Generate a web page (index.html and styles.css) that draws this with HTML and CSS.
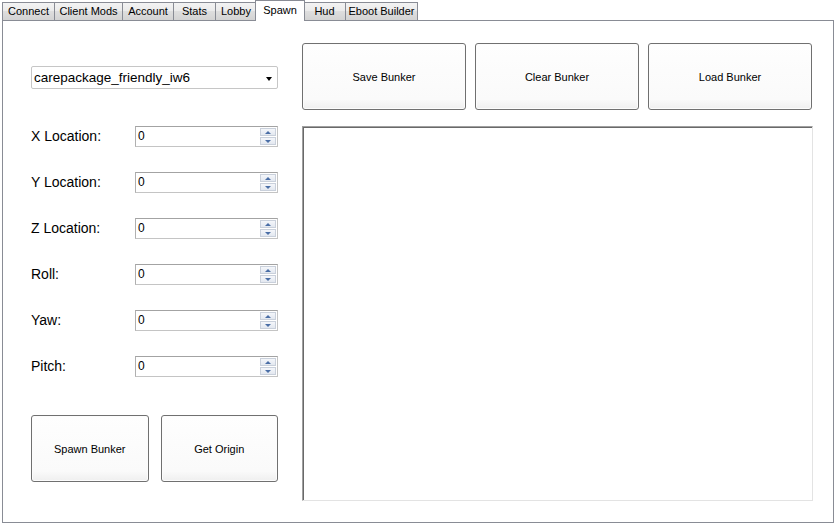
FILE: index.html
```html
<!DOCTYPE html>
<html>
<head>
<meta charset="utf-8">
<link rel="stylesheet" href="styles.css">
</head>
<body>
<div class="tabs">
  <div class="tab w-connect">Connect</div>
  <div class="tab w-client">Client Mods</div>
  <div class="tab w-account">Account</div>
  <div class="tab w-stats">Stats</div>
  <div class="tab w-lobby">Lobby</div>
  <div class="tab tab-active w-spawn">Spawn</div>
  <div class="tab w-hud">Hud</div>
  <div class="tab w-eboot">Eboot Builder</div>
</div>
<div class="page">
  <div class="left">
    <div class="combo">
      <span class="combo-text">carepackage_friendly_iw6</span>
      <span class="combo-arrow"></span>
    </div>
    <div class="fields">
      <div class="field"><span class="label">X Location:</span><div class="num"><span class="num-val">0</span><span class="spin"><span class="spin-btn"><span class="tri-up"></span></span><span class="spin-btn"><span class="tri-down"></span></span></span></div></div>
      <div class="field"><span class="label">Y Location:</span><div class="num"><span class="num-val">0</span><span class="spin"><span class="spin-btn"><span class="tri-up"></span></span><span class="spin-btn"><span class="tri-down"></span></span></span></div></div>
      <div class="field"><span class="label">Z Location:</span><div class="num"><span class="num-val">0</span><span class="spin"><span class="spin-btn"><span class="tri-up"></span></span><span class="spin-btn"><span class="tri-down"></span></span></span></div></div>
      <div class="field"><span class="label">Roll:</span><div class="num"><span class="num-val">0</span><span class="spin"><span class="spin-btn"><span class="tri-up"></span></span><span class="spin-btn"><span class="tri-down"></span></span></span></div></div>
      <div class="field"><span class="label">Yaw:</span><div class="num"><span class="num-val">0</span><span class="spin"><span class="spin-btn"><span class="tri-up"></span></span><span class="spin-btn"><span class="tri-down"></span></span></span></div></div>
      <div class="field"><span class="label">Pitch:</span><div class="num"><span class="num-val">0</span><span class="spin"><span class="spin-btn"><span class="tri-up"></span></span><span class="spin-btn"><span class="tri-down"></span></span></span></div></div>
    </div>
    <div class="left-buttons">
      <div class="btn btn-small">Spawn Bunker</div>
      <div class="btn btn-small">Get Origin</div>
    </div>
  </div>
  <div class="right">
    <div class="right-buttons">
      <div class="btn btn-wide">Save Bunker</div>
      <div class="btn btn-wide">Clear Bunker</div>
      <div class="btn btn-wide">Load Bunker</div>
    </div>
    <div class="listbox"></div>
  </div>
</div>
</body>
</html>
```
FILE: styles.css
```css
* { box-sizing: border-box; }
html, body { margin: 0; padding: 0; background: #ffffff; }
body {
  width: 840px;
  height: 528px;
  font-family: "Liberation Sans", Arial, sans-serif;
  color: #000;
  overflow: hidden;
}

.tabs {
  display: flex;
  align-items: flex-end;
  height: 20px;
  padding-left: 2px;
  position: relative;
  z-index: 2;
}
.tab {
  height: 18px;
  margin-right: -1px;
  border: 1px solid #898c95;
  border-bottom: none;
  background: linear-gradient(#f3f3f3, #ebebeb 45%, #dedede 50%, #d3d3d3);
  font-size: 11px;
  line-height: 17px;
  text-align: center;
  white-space: nowrap;
}
.tab-active {
  height: 21px;
  margin-bottom: -1px;
  background: #ffffff;
  line-height: 18px;
  margin-left: -1px;
  margin-right: -2px;
  position: relative;
  z-index: 3;
}
.w-connect { width: 53px; }
.w-client { width: 69px; }
.w-account { width: 52px; }
.w-stats { width: 43px; }
.w-lobby { width: 42px; }
.w-spawn { width: 50px; }
.w-hud { width: 43px; }
.w-eboot { width: 73px; }

.page {
  margin-left: 2px;
  width: 832px;
  height: 503px;
  border: 1px solid #898c95;
  background: #ffffff;
  display: flex;
  gap: 24px;
  padding: 22px 0 0 28px;
}

.left {
  width: 247px;
  display: flex;
  flex-direction: column;
  padding-top: 23px;
}
.combo {
  height: 23px;
  border: 1px solid #c6c6c6;
  border-radius: 2px;
  display: flex;
  align-items: center;
  justify-content: space-between;
  padding: 0 3px 0 2px;
  background: #fff;
}
.combo-text {
  font-size: 13.5px;
}
.combo-arrow {
  width: 0;
  height: 0;
  border-left: 3.5px solid transparent;
  border-right: 3.5px solid transparent;
  border-top: 4px solid #000;
  margin-right: 2px;
  margin-top: 2px;
}

.fields {
  display: flex;
  flex-direction: column;
  gap: 25px;
  margin-top: 37px;
}
.field {
  display: flex;
  align-items: center;
  height: 21px;
}
.label {
  width: 104px;
  font-size: 14px;
  margin-top: -1px;
}
.num {
  width: 143px;
  height: 21px;
  border: 1px solid #a9a9a9;
  border-color: #a3a3a3 #c4c4c4 #c4c4c4 #b0b0b0;
  display: flex;
  justify-content: space-between;
  align-items: stretch;
  padding: 1px;
}
.num-val {
  font-size: 12px;
  line-height: 17px;
  padding-left: 1px;
}
.spin {
  width: 16px;
  display: flex;
  flex-direction: column;
  gap: 1px;
}
.spin-btn {
  flex: 1;
  border: 1px solid #c9d0db;
  background: linear-gradient(#f4f6fa, #e3e8f0);
  display: flex;
  align-items: center;
  justify-content: center;
}
.tri-up, .tri-down {
  width: 0;
  height: 0;
  border-left: 3px solid transparent;
  border-right: 3px solid transparent;
}
.tri-up { border-bottom: 3px solid #4a6ea6; }
.tri-down { border-top: 3px solid #4a6ea6; }

.left-buttons {
  display: flex;
  gap: 12px;
  margin-top: 38px;
}

.btn {
  display: flex;
  align-items: center;
  justify-content: center;
  height: 67px;
  border: 1px solid #707070;
  border-radius: 3px;
  background: linear-gradient(#fefefe, #fafafa 85%, #efefef);
  box-shadow: inset 0 0 0 1px #fcfcfc;
  font-size: 11px;
}
.btn-small { width: 118px; }
.btn-wide { width: 164px; }

.right {
  width: 511px;
  display: flex;
  flex-direction: column;
}
.right-buttons {
  display: flex;
  gap: 9px;
}
.listbox {
  margin-top: 16px;
  width: 511px;
  height: 375px;
  border: 1px solid;
  border-color: #a0a0a0 #e3e3e3 #e3e3e3 #a0a0a0;
  box-shadow: inset 1px 1px 0 #696969;
  background: #fff;
}
```
